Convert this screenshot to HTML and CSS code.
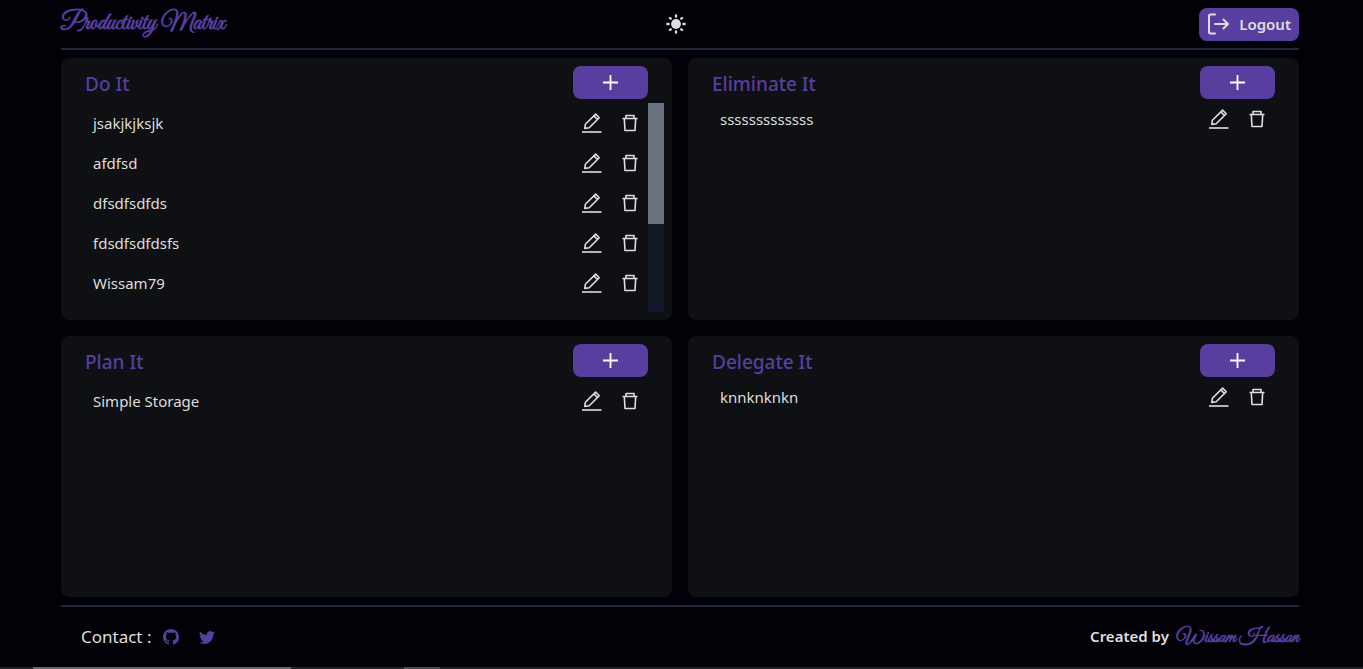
FILE: index.html
```html
<!DOCTYPE html>
<html lang="en">
<head>
<meta charset="utf-8">
<meta name="viewport" content="width=device-width, initial-scale=1">
<title>Productivity Matrix</title>
<link rel="stylesheet" href="styles.css">
</head>
<body>
<svg class="sprite" aria-hidden="true">
  <symbol id="edit" viewBox="0 0 20 20"><path d="M2.8 15.4 3.4 11.2 13.6 1.1 17.2 4.8 7.2 14.8ZM12 3 15.2 6.4" fill="none" stroke="currentColor" stroke-width="1.6" stroke-linejoin="round"/><path d="M0 19H19.5" stroke="currentColor" stroke-width="1.6"/></symbol>
  <symbol id="trash" viewBox="0 0 16 18"><path d="M0.5 4.5H15.5M4 4.5V1.5H12V4.5M2.3 4.5 3 16.5H13L13.7 4.5" fill="none" stroke="currentColor" stroke-width="1.6" stroke-linejoin="round"/></symbol>
  <symbol id="plus" viewBox="0 0 15 15"><path d="M7.5 0V15M0 7.5H15" stroke="currentColor" stroke-width="1.8"/></symbol>
</svg>
<div class="page">
  <header class="header">
    <h1 class="brand">Productivity Matrix</h1>
    <button class="icon-button theme" aria-label="Light theme">
      <svg width="20" height="20" viewBox="0 0 20 20"><circle cx="10" cy="10" r="4.9" fill="currentColor"/><path d="M10 1.4V2.6M10 17.4V18.6M1.4 10H2.6M17.4 10H18.6M4 4 4.7 4.7M15.3 15.3 16 16M4 16 4.7 15.3M15.3 4.7 16 4" stroke="currentColor" stroke-width="2.4" stroke-linecap="round"/></svg>
    </button>
    <button class="logout">
      <svg width="22" height="22" viewBox="0 0 22 22" fill="none" stroke="currentColor" stroke-width="2" stroke-linecap="round" stroke-linejoin="round"><path d="M8 1.5H3.5Q2 1.5 2 3V19Q2 20.5 3.5 20.5H8"/><path d="M8 11H21M16.5 6.5 21 11 16.5 15.5"/></svg>
      Logout
    </button>
  </header>
  <main class="matrix">
    <section class="card">
      <div class="card-head"><h2>Do It</h2><button class="add" aria-label="Add to Do It"><svg width="15" height="15"><use href="#plus"/></svg></button></div>
      <div class="scroller">
        <ul class="list list-long">
          <li><span>jsakjkjksjk</span><button class="icon-button" aria-label="Edit"><svg width="20" height="20"><use href="#edit"/></svg></button><button class="icon-button" aria-label="Delete"><svg width="16" height="18"><use href="#trash"/></svg></button></li>
          <li><span>afdfsd</span><button class="icon-button" aria-label="Edit"><svg width="20" height="20"><use href="#edit"/></svg></button><button class="icon-button" aria-label="Delete"><svg width="16" height="18"><use href="#trash"/></svg></button></li>
          <li><span>dfsdfsdfds</span><button class="icon-button" aria-label="Edit"><svg width="20" height="20"><use href="#edit"/></svg></button><button class="icon-button" aria-label="Delete"><svg width="16" height="18"><use href="#trash"/></svg></button></li>
          <li><span>fdsdfsdfdsfs</span><button class="icon-button" aria-label="Edit"><svg width="20" height="20"><use href="#edit"/></svg></button><button class="icon-button" aria-label="Delete"><svg width="16" height="18"><use href="#trash"/></svg></button></li>
          <li><span>Wissam79</span><button class="icon-button" aria-label="Edit"><svg width="20" height="20"><use href="#edit"/></svg></button><button class="icon-button" aria-label="Delete"><svg width="16" height="18"><use href="#trash"/></svg></button></li>
        </ul>
        <div class="track"><div class="thumb"></div></div>
      </div>
    </section>
    <section class="card">
      <div class="card-head"><h2>Eliminate It</h2><button class="add" aria-label="Add to Eliminate It"><svg width="15" height="15"><use href="#plus"/></svg></button></div>
      <ul class="list">
        <li><span>sssssssssssss</span><button class="icon-button" aria-label="Edit"><svg width="20" height="20"><use href="#edit"/></svg></button><button class="icon-button" aria-label="Delete"><svg width="16" height="18"><use href="#trash"/></svg></button></li>
      </ul>
    </section>
    <section class="card">
      <div class="card-head"><h2>Plan It</h2><button class="add" aria-label="Add to Plan It"><svg width="15" height="15"><use href="#plus"/></svg></button></div>
      <ul class="list list-spaced">
        <li><span>Simple Storage</span><button class="icon-button" aria-label="Edit"><svg width="20" height="20"><use href="#edit"/></svg></button><button class="icon-button" aria-label="Delete"><svg width="16" height="18"><use href="#trash"/></svg></button></li>
      </ul>
    </section>
    <section class="card">
      <div class="card-head"><h2>Delegate It</h2><button class="add" aria-label="Add to Delegate It"><svg width="15" height="15"><use href="#plus"/></svg></button></div>
      <ul class="list">
        <li><span>knnknknkn</span><button class="icon-button" aria-label="Edit"><svg width="20" height="20"><use href="#edit"/></svg></button><button class="icon-button" aria-label="Delete"><svg width="16" height="18"><use href="#trash"/></svg></button></li>
      </ul>
    </section>
  </main>
  <footer class="footer">
    <div class="contact">
      <span>Contact :</span>
      <a href="#github" aria-label="GitHub"><svg width="16" height="16" viewBox="0 0 16 16" fill="currentColor"><path d="M8 0C3.58 0 0 3.58 0 8c0 3.54 2.29 6.53 5.47 7.59.4.07.55-.17.55-.38 0-.19-.01-.82-.01-1.49-2.01.37-2.53-.49-2.69-.94-.09-.23-.48-.94-.82-1.13-.28-.15-.68-.52-.01-.53.63-.01 1.08.58 1.23.82.72 1.21 1.87.87 2.33.66.07-.52.28-.87.51-1.07-1.78-.2-3.64-.89-3.64-3.95 0-.87.31-1.59.82-2.15-.08-.2-.36-1.02.08-2.12 0 0 .67-.21 2.2.82.64-.18 1.32-.27 2-.27s1.36.09 2 .27c1.53-1.04 2.2-.82 2.2-.82.44 1.1.16 1.92.08 2.12.51.56.82 1.27.82 2.15 0 3.07-1.87 3.75-3.65 3.95.29.25.54.73.54 1.48 0 1.07-.01 1.93-.01 2.2 0 .21.15.46.55.38A8.01 8.01 0 0 0 16 8c0-4.42-3.58-8-8-8z"/></svg></a>
      <a href="#twitter" aria-label="Twitter"><svg width="16" height="16" viewBox="0 0 16 16" fill="currentColor"><path d="M5.03 15c6.04 0 9.34-5 9.34-9.33 0-.14 0-.28-.01-.42A6.7 6.7 0 0 0 16 3.54a6.6 6.6 0 0 1-1.89.52 3.3 3.3 0 0 0 1.45-1.82 6.5 6.5 0 0 1-2.09.79A3.29 3.29 0 0 0 7.88 6.03 9.32 9.32 0 0 1 1.11 2.6a3.29 3.29 0 0 0 1.02 4.38A3.3 3.3 0 0 1 .64 6.57v.04a3.29 3.29 0 0 0 2.63 3.22 3.2 3.2 0 0 1-1.48.06 3.29 3.29 0 0 0 3.07 2.28A6.6 6.6 0 0 1 0 13.53 9.3 9.3 0 0 0 5.03 15"/></svg></a>
    </div>
    <p class="credit">Created by <a class="author" href="#author">Wissam Hassan</a></p>
  </footer>
</div>
<div class="bottom-edge"><i class="edge-search"></i><i class="edge-active"></i></div>
</body>
</html>
```
FILE: styles.css
```css
* { box-sizing: border-box; }
body {
  margin: 0;
  min-height: 100vh;
  display: flex;
  flex-direction: column;
  background: #020107;
  color: #dedede;
  font: 15px/24px "Segoe UI", "Noto Sans", "Open Sans", sans-serif;
}
h1, h2, p, ul { margin: 0; padding: 0; }
button { border: 0; padding: 0; font: inherit; color: inherit; cursor: pointer; }
a { color: #573e9f; text-decoration: none; }
svg { display: block; }
.sprite { position: absolute; width: 0; height: 0; }
.page {
  flex: 1;
  display: flex;
  flex-direction: column;
  padding: 0 64px 0 61px;
}
.header {
  display: grid;
  grid-template-columns: 1fr auto 1fr;
  align-items: center;
  height: 50px;
  border-bottom: 2px solid #1f2937;
}
.brand, .author {
  font-family: "Great Vibes", "Liberation Serif", serif;
  font-weight: 700;
  color: #573e9f;
}
.brand { font-size: 24px; line-height: 32px; }
.theme { margin-right: 8px; }
.icon-button { background: none; }
.logout {
  justify-self: end;
  display: flex;
  align-items: center;
  gap: 10px;
  height: 33px;
  padding: 0 8px;
  border-radius: 8px;
  background: #573e9f;
  font-weight: 600;
}
.matrix {
  flex: 1;
  display: grid;
  grid-template: 1fr 1fr / 1fr 1fr;
  gap: 16px;
  padding: 8px 0;
}
.card {
  display: flex;
  flex-direction: column;
  min-height: 0;
  padding: 8px;
  border-radius: 8px;
  background: #0f1013;
}
.card-head {
  display: flex;
  justify-content: space-between;
  padding: 0 16px;
}
.card-head h2 {
  font-size: 19px;
  line-height: 36px;
  font-weight: 500;
  color: #573e9f;
}
.add {
  display: grid;
  place-items: center;
  width: 75px;
  height: 33px;
  border-radius: 8px;
  background: #573e9f;
  color: #fff;
}
.scroller {
  flex: 1;
  display: flex;
  min-height: 0;
  margin-top: 1px;
}
.track {
  width: 16px;
  background: #111827;
}
.thumb {
  height: 58%;
  background: #6b7280;
}
.list {
  list-style: none;
  padding: 0 26px 0 24px;
}
.list li {
  display: flex;
  align-items: center;
  height: 34px;
}
.list-long {
  flex: 1;
  padding-right: 10px;
}
.list-long li { height: 40px; }
.list-spaced { padding-top: 4px; }
.list span { flex: 1; }
.list .icon-button + .icon-button { margin-left: 20px; }
.footer {
  display: flex;
  justify-content: space-between;
  align-items: center;
  height: 62px;
  padding-left: 20px;
  border-top: 2px solid #1f2937;
}
.contact {
  display: flex;
  align-items: center;
  font-size: 17px;
}
.contact a { margin-left: 12px; }
.contact a + a { margin-left: 20px; }
.credit { font-size: 15px; font-weight: 600; }
.author { font-size: 20px; margin-left: 4px; }
.bottom-edge {
  display: flex;
  height: 2px;
  padding-left: 33px;
  background: #222;
}
.edge-search { width: 258px; background: #666; }
.edge-active { width: 36px; margin-left: 113px; background: #4a4a4a; }
```
